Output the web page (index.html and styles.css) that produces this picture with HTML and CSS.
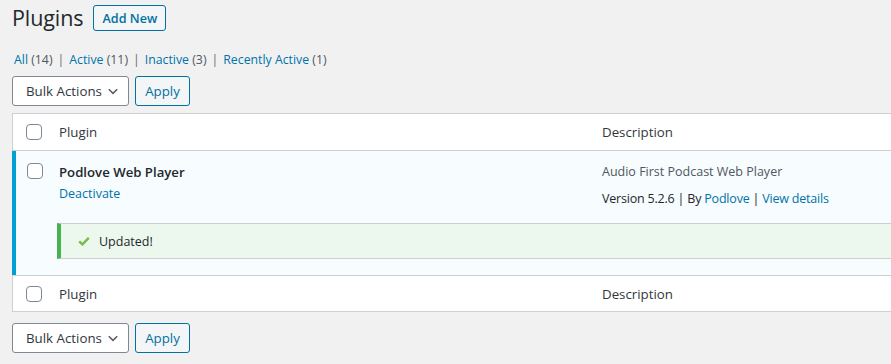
FILE: index.html
```html
<!DOCTYPE html>
<html lang="en">
<head>
<meta charset="utf-8">
<title>Plugins</title>
<link rel="stylesheet" href="styles.css">
</head>
<body>
<div class="wrap">
  <div class="heading">
    <h1 class="title">Plugins</h1>
    <a class="btn-outline add-new">Add New</a>
  </div>
  <ul class="views">
    <li><a>All <span class="count">(14)</span></a><span class="sep">|</span></li>
    <li><a>Active <span class="count">(11)</span></a><span class="sep">|</span></li>
    <li><a>Inactive <span class="count">(3)</span></a><span class="sep">|</span></li>
    <li><a>Recently Active <span class="count">(1)</span></a></li>
  </ul>
  <div class="tablenav top">
    <div class="select"><span>Bulk Actions</span>
      <svg class="chev" width="10" height="7" viewBox="0 0 10 7"><path d="M0.8 1.2 L5 5.4 L9.2 1.2" fill="none" stroke="#555d66" stroke-width="1.5"/></svg>
    </div>
    <a class="btn-outline apply">Apply</a>
  </div>
  <div class="table">
    <div class="row head">
      <div class="cb"><span class="box"></span></div>
      <div class="cell">Plugin</div>
      <div class="cell">Description</div>
    </div>
    <div class="active-group">
      <div class="row plugin">
        <div class="cb"><span class="box"></span></div>
        <div class="cell">
          <div class="name">Podlove Web Player</div>
          <div class="actions"><a>Deactivate</a></div>
        </div>
        <div class="cell desc">
          <p class="d1">Audio First Podcast Web Player</p>
          <p class="d2">Version 5.2.6 | By <a>Podlove</a> | <a>View details</a></p>
        </div>
      </div>
      <div class="update-row">
        <div class="notice">
          <svg class="check" width="12" height="9" viewBox="0 0 12 9"><path d="M1.2 4.4 L4.4 7.4 L10.8 0.9" fill="none" stroke="#79ba49" stroke-width="2.4"/></svg>
          <span>Updated!</span>
        </div>
      </div>
    </div>
    <div class="row foot">
      <div class="cb"><span class="box"></span></div>
      <div class="cell">Plugin</div>
      <div class="cell">Description</div>
    </div>
  </div>
  <div class="tablenav bottom">
    <div class="select"><span>Bulk Actions</span>
      <svg class="chev" width="10" height="7" viewBox="0 0 10 7"><path d="M0.8 1.2 L5 5.4 L9.2 1.2" fill="none" stroke="#555d66" stroke-width="1.5"/></svg>
    </div>
    <a class="btn-outline apply">Apply</a>
  </div>
</div>
</body>
</html>
```
FILE: styles.css
```css
* { box-sizing: border-box; }
html, body { margin: 0; padding: 0; }
body {
  background: #f1f1f1;
  color: #23282d;
  font-family: "Open Sans", "Noto Sans", sans-serif;
  font-size: 12.5px;
  overflow: hidden;
  width: 891px;
  height: 364px;
}
a { color: #0073aa; text-decoration: none; }
.wrap { padding: 5px 0 0 12px; }
.heading { display: flex; align-items: center; height: 26px; }
.title {
  margin: 0;
  font-size: 21.5px;
  font-weight: 400;
  line-height: 26px;
  color: #23282d;
  letter-spacing: -0.1px;
}
.btn-outline {
  display: inline-flex;
  align-items: center;
  justify-content: center;
  border: 1px solid #0071a1;
  border-radius: 3px;
  background: #f3f5f6;
  color: #0071a1;
}
.add-new { margin-left: 10px; width: 73px; height: 26px; font-size: 12.6px; font-weight: 600; }
.views {
  list-style: none;
  margin: 0;
  padding: 0;
  display: flex;
  height: 22px;
  margin-top: 17px;
  align-items: center;
  color: #646970;
  font-size: 12.3px;
  padding-left: 2px;
}
.views li { display: flex; align-items: center; }
.views .count { color: #50575e; }
.views .sep { margin: 0 5px; color: #646970; }
.tablenav { display: flex; gap: 6px; height: 30px; }
.tablenav.top { margin-top: 6px; }
.tablenav.bottom { margin-top: 11px; }
.select {
  width: 117px;
  height: 30px;
  border: 1px solid #7e8993;
  border-radius: 3px;
  background: #fff;
  display: flex;
  align-items: center;
  justify-content: space-between;
  padding: 0 10px 0 13px;
  font-size: 13.3px;
  color: #32373c;
}
.chev { display: block; }
.apply { width: 55px; height: 30px; font-size: 13.3px; }
.table {
  margin-top: 7px;
  background: #fff;
  border-top: 1px solid #ccd0d4;
  border-bottom: 1px solid #ccd0d4;
  border-left: 1px solid #ccd0d4;
  width: 900px;
}
.row {
  display: grid;
  grid-template-columns: 46px 543px 1fr;
  font-size: 13.3px;
}
.row.head, .row.foot { align-items: center; color: #32373c; }
.row.head { height: 37px; border-bottom: 1px solid #ccd0d4; }
.row.foot { height: 36px; border-top: 1px solid #ccd0d4; }
.cb { padding-left: 13px; display: flex; align-items: center; }
.box {
  display: block;
  width: 16px;
  height: 16px;
  border: 1px solid #7e8993;
  border-radius: 4px;
  background: #fff;
}
.active-group {
  margin-left: -1px;
  border-left: 4px solid #00a0d2;
  background: #f7fcfe;
}
.active-group .row { grid-template-columns: 44px 543px 1fr; }
.active-group .cb { padding-left: 11px; align-items: flex-start; padding-top: 1px; }
.plugin { padding-top: 11px; height: 72px; }
.name { font-weight: 600; font-size: 13.2px; line-height: 20px; color: #23282d; margin-left: -1px; }
.actions { margin-top: 2px; line-height: 20px; font-size: 12.5px; margin-left: -1px; }
.desc p { margin: 0; line-height: 20px; font-size: 12.5px; margin-left: -1px; }
.desc .d1 { color: #50575e; }
.desc .d2 { margin-top: 7px; color: #23282d; letter-spacing: -0.2px; }
.update-row { padding: 0 0 16px 41px; }
.notice {
  height: 36px;
  background: #ecf7ed;
  border-left: 4px solid #46b450;
  border-top: 1px solid #ccd0d4;
  border-bottom: 1px solid #ccd0d4;
  display: flex;
  align-items: center;
  padding-left: 17px;
  font-size: 12.5px;
  color: #23282d;
}
.check { margin-right: 9px; }
```
